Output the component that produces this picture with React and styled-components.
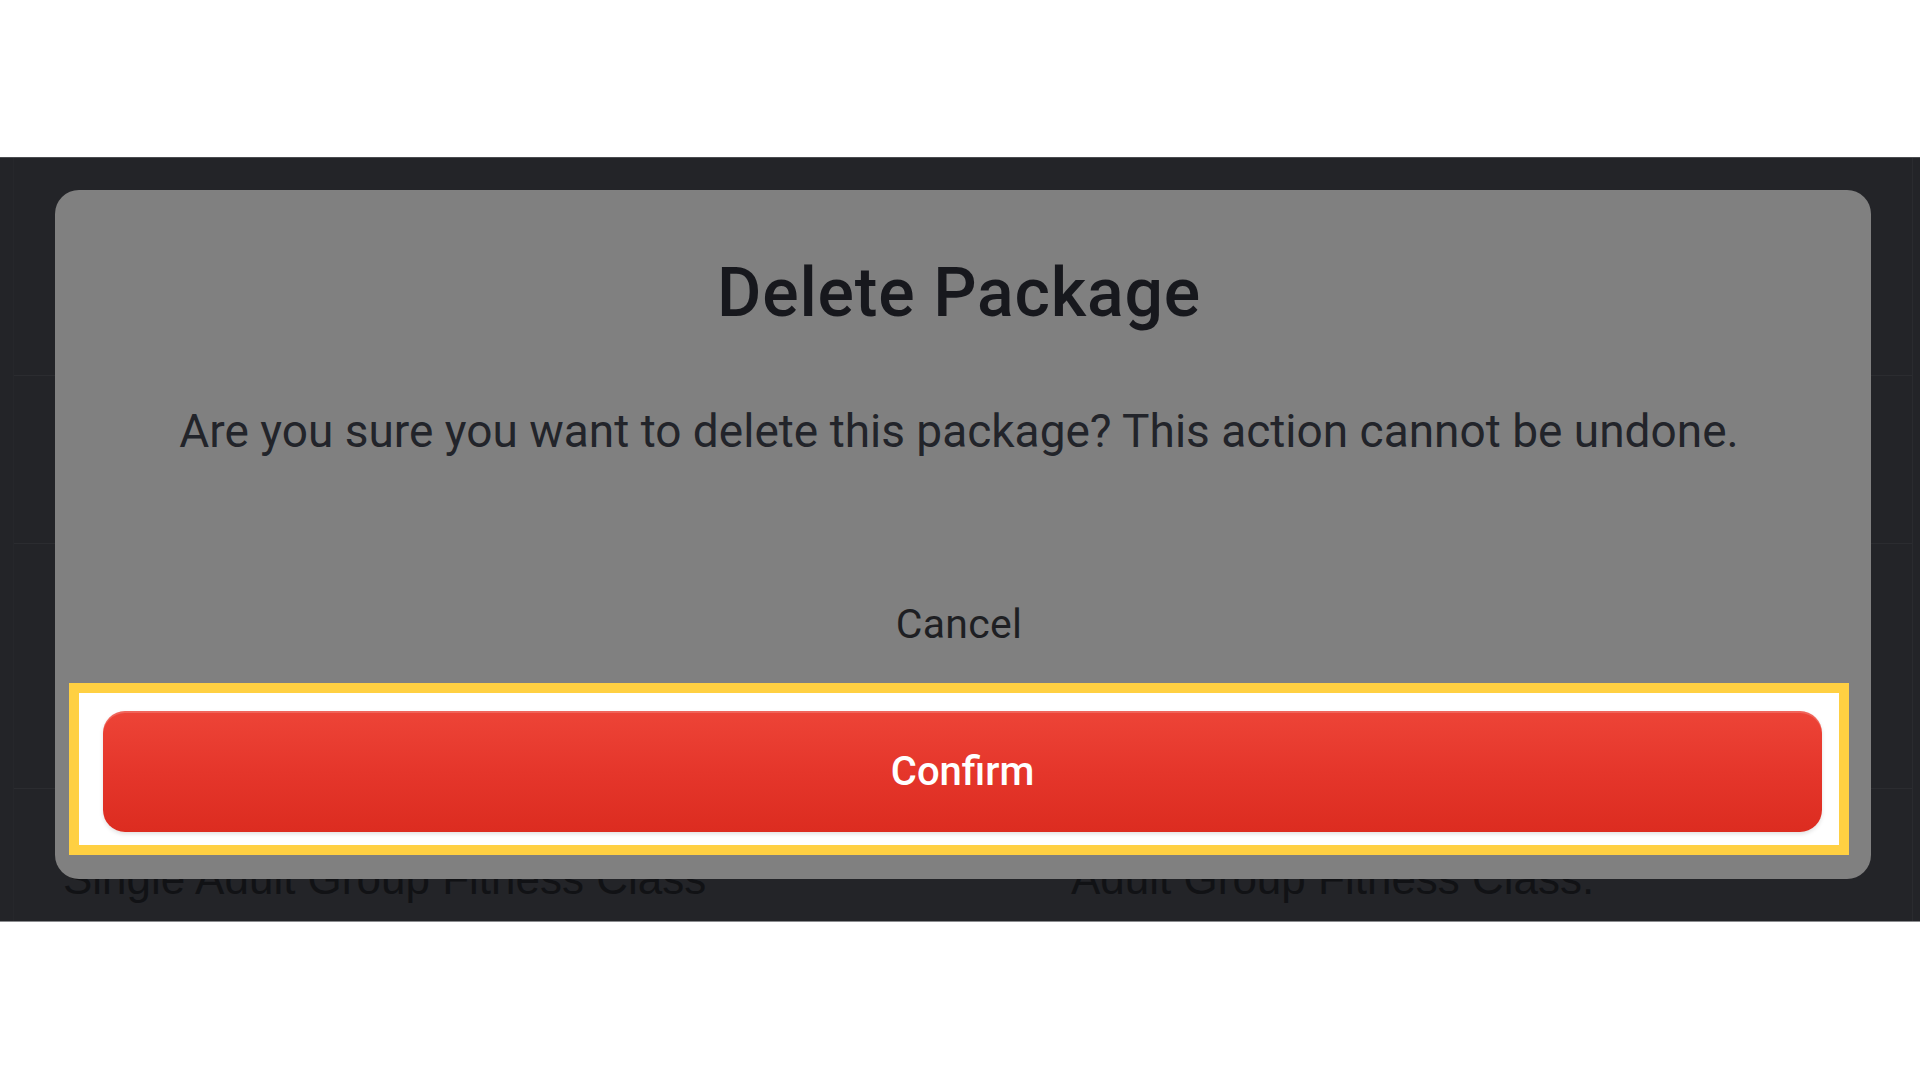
import React from "react";
import styled, { createGlobalStyle } from "styled-components";

const GlobalStyle = createGlobalStyle`
  html, body {
    margin: 0;
    padding: 0;
    background: #ffffff;
  }
  body {
    font-family: Roboto, "Liberation Sans", Arial, sans-serif;
  }
`;

const rows = [
  { height: 218 },
  { height: 168 },
  { height: 245 },
  { height: 133, left: "Single Adult Group Fitness Class", right: "Adult Group Fitness Class." },
];

const App = () => {
  return (
    <>
      <GlobalStyle />
      <Page>
        <Spacer $height={157} />
        <Screen>
          <List>
            {rows.map((row, i) => (
              <Row key={i} $height={row.height}>
                {row.left && <RowText>{row.left}</RowText>}
                {row.right && <RowText>{row.right}</RowText>}
              </Row>
            ))}
          </List>
          <Modal>
            <Title>Delete Package</Title>
            <Message>
              Are you sure you want to delete this package? This action cannot be undone.
            </Message>
            <CancelButton>Cancel</CancelButton>
            <Highlight>
              <ConfirmButton>Confirm</ConfirmButton>
            </Highlight>
          </Modal>
        </Screen>
        <Spacer $height={158} />
      </Page>
    </>
  );
};

const Page = styled.div`
  width: 1920px;
  height: 1080px;
  display: flex;
  flex-direction: column;
  background: #ffffff;
  overflow: hidden;
`;

const Spacer = styled.div`
  height: ${(p) => p.$height}px;
  flex-shrink: 0;
`;

const Screen = styled.div`
  position: relative;
  height: 765px;
  flex-shrink: 0;
  background: #232428;
  border-top: 1px solid #4b4c50;
  border-bottom: 1px solid #8a8b8e;
  box-sizing: border-box;
  overflow: hidden;
`;

const List = styled.div`
  display: flex;
  flex-direction: column;
  margin: 0 7px 0 13px;
  border-left: 1px solid #26272b;
  border-right: 1px solid #2a2b2f;
`;

const Row = styled.div`
  height: ${(p) => p.$height}px;
  display: grid;
  grid-template-columns: 1008px 1fr;
  align-items: end;
  padding: 0 0 18px 49px;
  box-sizing: border-box;
  border-bottom: 1px solid #2b2c30;

  &:last-child {
    border-bottom: none;
  }
`;

const RowText = styled.span`
  font-family: "Liberation Sans", Arial, sans-serif;
  font-size: 44px;
  line-height: 50px;
  color: #111215;
  white-space: nowrap;
`;

const Modal = styled.div`
  position: absolute;
  left: 55px;
  top: 32px;
  width: 1816px;
  height: 689px;
  box-sizing: border-box;
  background: #808080;
  border-radius: 24px;
  display: flex;
  flex-direction: column;
  align-items: center;
  padding: 69px 22px 24px 14px;
`;

const Title = styled.h1`
  margin: 0;
  font-family: Roboto, "Liberation Sans", sans-serif;
  font-weight: 500;
  font-size: 68px;
  line-height: 68px;
  color: #17181d;
  letter-spacing: 0.8px;
`;

const Message = styled.p`
  margin: 81px 0 0;
  font-family: Roboto, "Liberation Sans", sans-serif;
  font-size: 46px;
  line-height: 46px;
  color: #22242a;
`;

const CancelButton = styled.button`
  all: unset;
  margin-top: 149px;
  font-family: Roboto, "Liberation Sans", sans-serif;
  font-size: 41px;
  line-height: 42px;
  color: #1e1f23;
  letter-spacing: 0.3px;
  cursor: pointer;
`;

const Highlight = styled.div`
  margin-top: 38px;
  align-self: stretch;
  border: 10px solid #ffd042;
  background: #ffffff;
  padding: 18px 17px 13px 24px;
`;

const ConfirmButton = styled.button`
  all: unset;
  box-sizing: border-box;
  width: 100%;
  height: 121px;
  display: flex;
  align-items: center;
  justify-content: center;
  border-radius: 22px;
  background: linear-gradient(180deg, #ed4437 0%, #e5362b 50%, #dc2c20 100%);
  box-shadow: inset 0 2px 0 rgba(255, 255, 255, 0.18), 0 2px 4px rgba(0, 0, 0, 0.12);
  font-family: Roboto, "Liberation Sans", sans-serif;
  font-weight: 500;
  font-size: 40px;
  color: #ffffff;
  cursor: pointer;
`;

export default App;
